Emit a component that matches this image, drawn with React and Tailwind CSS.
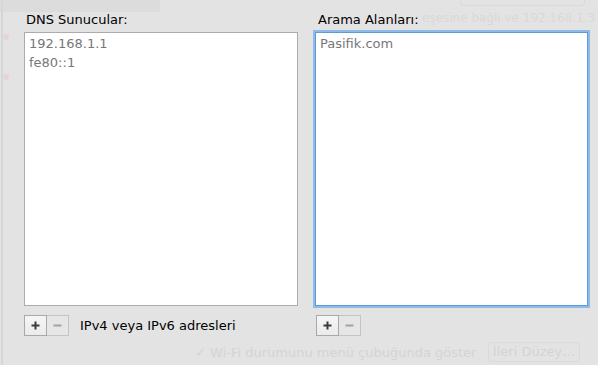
export default function App() {
  const font = { fontFamily: '"Lucida Grande", "DejaVu Sans", sans-serif' };
  const Btns = () => (
    <div className="flex h-[21px]">
      <div className="w-[23px] h-[21px] border border-[#a9a9a9] bg-gradient-to-b from-[#f6f6f6] to-[#ebebeb] flex items-center justify-center">
        <svg width="11" height="11" viewBox="0 0 11 11"><path d="M5.5 1.5v8M1.5 5.5h8" stroke="#3a3a3a" strokeWidth="2" /></svg>
      </div>
      <div className="w-[22px] h-[21px] border border-l-0 border-[#c4c4c4] bg-[#e6e6e6] flex items-center justify-center">
        <svg width="11" height="11" viewBox="0 0 11 11"><path d="M1.5 5.5h8" stroke="#a3a3a3" strokeWidth="2" /></svg>
      </div>
    </div>
  );
  return (
    <div className="relative w-[598px] h-[365px] bg-[#e3e3e3] overflow-hidden" style={font}>
      {/* ghosted background content */}
      <div className="absolute left-0 top-0 w-[160px] h-[12px] bg-[#dcdcdc]" />
      <div className="absolute left-[1px] top-0 w-[2px] h-[365px] bg-[#d6d6d6]" />
      <div className="absolute left-[3px] top-[34px] w-[6px] h-[6px] rounded-full bg-[#e6d4d4]" />
      <div className="absolute left-[3px] top-[74px] w-[6px] h-[6px] rounded-full bg-[#e6d4d4]" />
      <div className="absolute left-[422px] top-[11px] text-[12px] leading-[14px] text-[#d9d9d9] whitespace-nowrap">eşesine bağlı ve 192.168.1.3</div>
      <div className="absolute left-[460px] top-0 w-[125px] h-[6px] border border-t-0 border-[#dadada] rounded-b" />
      <div className="absolute left-[195px] top-[343px] text-[13px] text-[#d4d4d4] whitespace-nowrap">✓ Wi-Fi durumunu menü çubuğunda göster</div>
      <div className="absolute left-[488px] top-[342px] w-[92px] h-[20px] border border-[#dadada] rounded text-[13px] text-[#d4d4d4] flex items-center justify-center">İleri Düzey…</div>

      <div className="relative flex gap-[17px] pl-[24px] pt-[12px]">
        <div className="w-[274px] flex flex-col">
          <div className="text-[13px] leading-[16px] text-black pl-[2px] h-[20px]">DNS Sunucular:</div>
          <div className="h-[274px] bg-white border border-[#ababab] pt-[1px] pl-[4px] text-[13px] leading-[19px] text-[#777777]">
            <div>192.168.1.1</div>
            <div>fe80::1</div>
          </div>
          <div className="flex items-center mt-[9px]">
            <Btns />
            <div className="ml-[11px] text-[13px] text-black">IPv4 veya IPv6 adresleri</div>
          </div>
        </div>
        <div className="w-[273px] flex flex-col">
          <div className="text-[13px] leading-[16px] text-black pl-[3px] h-[20px]">Arama Alanları:</div>
          <div className="h-[274px] bg-white border border-[#5d9ad8] shadow-[0_0_0_2px_#8fbbe8] pt-[1px] pl-[4px] text-[13px] leading-[19px] text-[#777777]">
            <div>Pasifik.com</div>
          </div>
          <div className="flex items-center mt-[9px] pl-[1px]">
            <Btns />
          </div>
        </div>
      </div>
    </div>
  );
}
